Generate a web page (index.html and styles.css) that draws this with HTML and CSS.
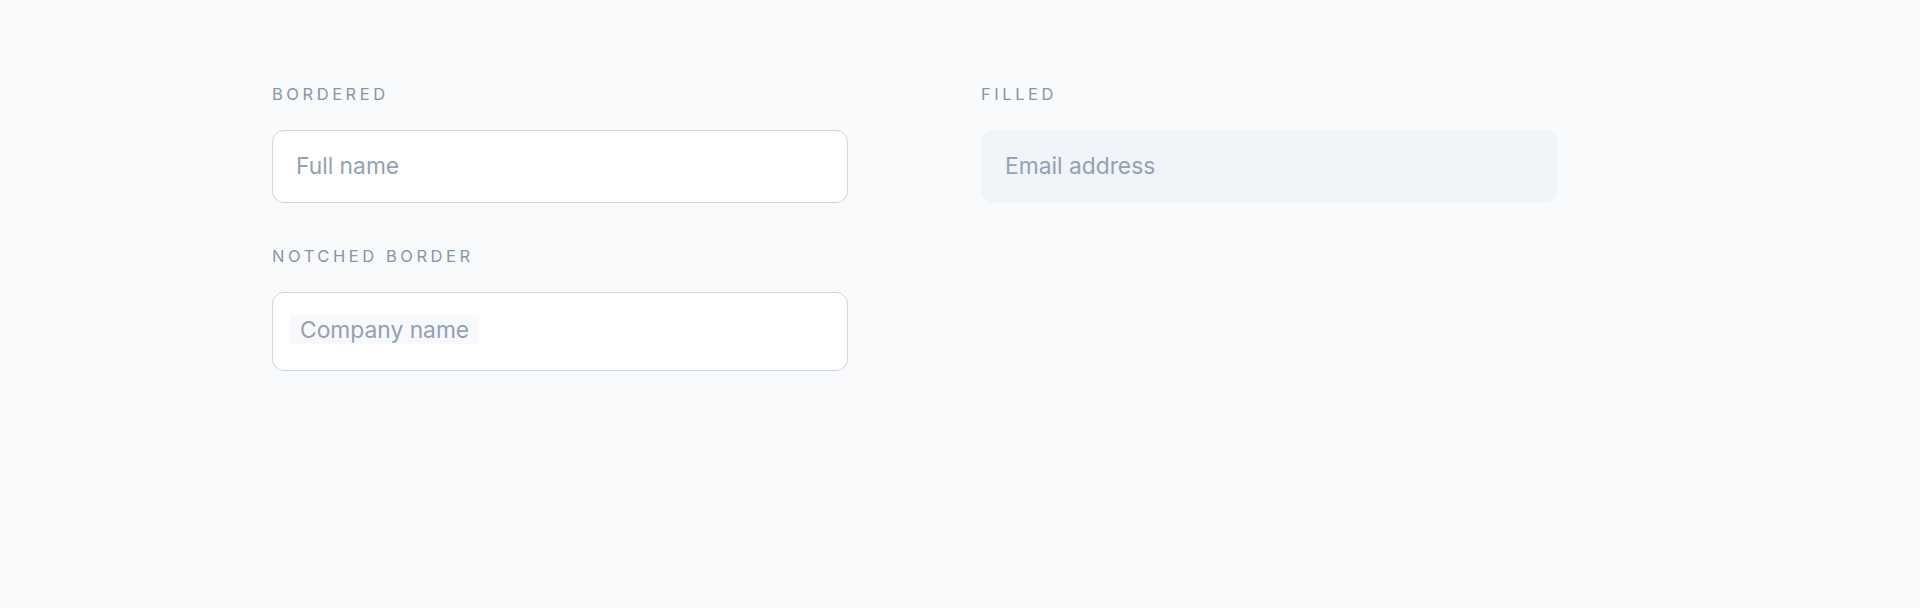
FILE: index.html
```html
<!DOCTYPE html>
<html lang="en">
<head>
<meta charset="utf-8">
<title>Input variants</title>
<link rel="stylesheet" href="styles.css">
</head>
<body>
<main class="page">
  <div class="grid">
    <div class="column">
      <section class="field">
        <div class="label">Bordered</div>
        <input class="input input-bordered" type="text" placeholder="Full name">
      </section>
      <section class="field">
        <div class="label">Notched border</div>
        <div class="input-notched">
          <span class="notch">Company name</span>
        </div>
      </section>
    </div>
    <div class="column">
      <section class="field">
        <div class="label">Filled</div>
        <input class="input input-filled" type="text" placeholder="Email address">
      </section>
    </div>
  </div>
</main>
</body>
</html>
```

FILE: styles.css
```css
* { box-sizing: border-box; }

html, body {
  margin: 0;
  background: #f8fafc;
  font-family: Inter, "Noto Sans", "Liberation Sans", sans-serif;
}

.page {
  padding: 84px 0 0 272px;
  height: 608px;
}

.grid {
  display: grid;
  grid-template-columns: 576px 576px;
  column-gap: 133px;
  align-items: start;
}

.column {
  display: flex;
  flex-direction: column;
  gap: 43px;
}

.field {
  display: flex;
  flex-direction: column;
}

.label {
  font-size: 16.5px;
  line-height: 20px;
  letter-spacing: 3.55px;
  text-transform: uppercase;
  color: #8a94a7;
  margin-bottom: 26px;
}

.input {
  display: block;
  width: 576px;
  height: 73px;
  padding: 0 23px 2px;
  font-family: inherit;
  font-size: 22.8px;
  color: #334155;
  border-radius: 12px;
  outline: none;
}

.input::placeholder {
  color: #94a0b4;
  opacity: 1;
}

.input-bordered {
  background: #ffffff;
  border: 1.5px solid #cfd5de;
}

.input-filled {
  background: #f1f4f9;
  border: 1px solid #f1f4f9;
}

.input-notched {
  width: 576px;
  height: 79px;
  background: #ffffff;
  border: 1.5px solid #cfd5de;
  border-radius: 12px;
  padding: 22px 0 0 17px;
  display: flex;
  align-items: flex-start;
}

.notch {
  display: block;
  background: #f7f9fc;
  padding: 0 10px;
  height: 29px;
  line-height: 29px;
  font-size: 22.8px;
  color: #94a0b4;
}
```
